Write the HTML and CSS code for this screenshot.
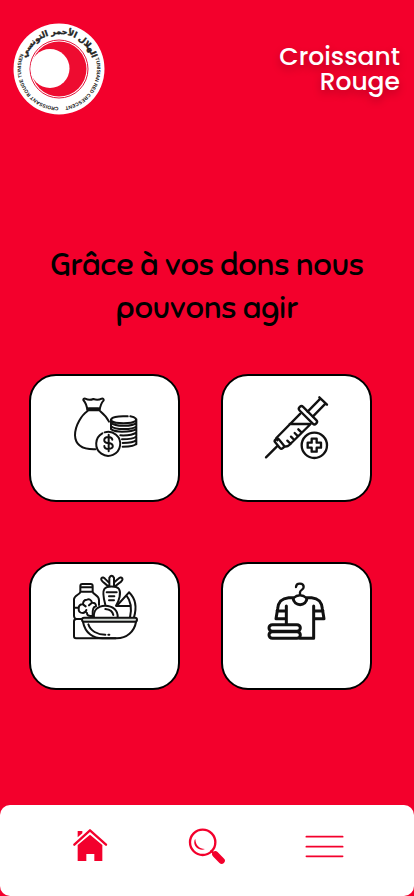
FILE: index.html
```html
<!DOCTYPE html>
<html lang="fr">
<head>
<meta charset="utf-8">
<meta name="viewport" content="width=device-width, initial-scale=1">
<title>Croissant Rouge</title>
<link rel="stylesheet" href="styles.css">
</head>
<body>
<header class="header">
  <svg class="logo" viewBox="0 0 92 92" role="img" aria-label="Croissant Rouge Tunisien">
    <defs>
      <path id="arc-top" d="M11 46A35 35 0 0 1 81 46"/>
      <path id="arc-left" d="M44 84A38 38 0 0 1 10.300 33"/>
      <path id="arc-right" d="M81.700 33A38 38 0 0 1 50 83.800"/>
    </defs>
    <circle cx="46" cy="46" r="45.500" fill="#fff"/>
    <circle cx="46" cy="46" r="29" fill="none" stroke="#e4123a" stroke-width="1"/>
    <circle cx="46" cy="46" r="27.500" fill="#ee0c30"/>
    <circle cx="37" cy="45.500" r="19.500" fill="#fff"/>
    <text class="logo-arabic" text-anchor="middle"><textPath href="#arc-top" startOffset="50%">الهلال الأحمر التونسي</textPath></text>
    <text class="logo-latin" text-anchor="middle"><textPath href="#arc-left" startOffset="50%">CROISSANT ROUGE TUNISIEN</textPath></text>
    <text class="logo-latin" text-anchor="middle"><textPath href="#arc-right" startOffset="50%">TUNISIAN RED CRESCENT</textPath></text>
  </svg>
  <p class="brand">Croissant<br>Rouge</p>
</header>

<main class="main">
  <h1 class="headline">Grâce à vos dons nous pouvons agir</h1>
  <div class="cards">
    <button class="card" type="button" aria-label="Argent">
      <svg class="card-icon" viewBox="157 87 192 192" stroke-width="6">
        <path d="M200 133Q198 113 188 102Q187 97 194 98Q206 104 218 99Q231 104 243 98Q250 97 249 103Q239 114 237 133M204 127H233M200 133H237M201 135C184 146 163 177 163 208C164 239 188 251 224 250M238 135C249 144 259 155 265 167"/>
        <path d="M329 151C346 154 349 160 344 165C334 174 283 174 273 165C265 153 294 149 321 151M271 160V190M347 160V235M272 171C282 182 337 182 347 171M272 181C282 192 337 192 347 181M272 190C281 196 292 197 304 197C324 197 341 194 347 189M299 208C324 209 341 204 347 200M304 220C327 220 342 216 347 211M306 231C328 231 342 227 347 222M306 242C328 242 344 239 347 232"/>
        <path d="M245 202A36 36 0 1 0 252 199M275 221C274 214 269 213 263 213C247 213 247 231 261 231C281 231 281 249 264 249C256 249 251 245 251 240M264 206V256"/>
      </svg>
    </button>
    <button class="card" type="button" aria-label="Soins médicaux">
      <svg class="card-icon" viewBox="157 87 192 192" stroke-width="7">
        <path d="M160 274L193 241M320 94L343 116M323 98L285 137M339 112L301 151"/>
        <rect x="251" y="140" width="70" height="15" rx="7" transform="rotate(45 285.500 147.500)"/>
        <rect x="183" y="226" width="34" height="14" rx="6" transform="rotate(50 200 233)"/>
        <path d="M263 143L191 216L194 223M294 174L230 237Q224 243 215 241M231 174H292M257 190L267 200M246 201L256 211M235 212L245 222M224 224L234 234"/>
        <circle cx="305" cy="238" r="38"/>
        <path d="M297 218H312V230H325V245H312V257H297V245H285V230H297Z"/>
      </svg>
    </button>
    <button class="card card-raised" type="button" aria-label="Nourriture">
      <svg class="card-icon" viewBox="157 60 192 192" stroke-width="6">
        <path d="M179 110V93Q179 87 185 87H210Q216 87 216 93V110ZM179 97H216M179 110C179 119 160 120 160 133V183Q161 191 167 192Q160 193 160 199V244Q160 250 166 250H285M216 110C217 120 235 119 235 136V150M160 158H173M165 192H184"/>
        <path d="M216 183Q214 155 226 154Q226 142 214 143Q210 130 199 134Q187 134 187 148Q174 147 174 160Q173 174 187 174Q196 172 197 165M187 148L195 154M214 143L205 151M199 174Q199 184 212 183"/>
        <path d="M220 187C217 166 232 152 253 152C278 152 292 167 291 187M254 162Q275 164 278 180"/>
        <path d="M254 149C249 130 244 113 251 102C258 92 287 92 295 102C302 113 296 136 286 152M258 112H288M265 124H281M265 136H280M263 96C258 85 238 80 242 70Q247 64 255 73L264 82M266 94V68Q273 56 280 68V94M283 96C288 85 310 80 305 70Q300 64 291 73L281 82"/>
        <path d="M325 112C347 133 348 160 340 187M325 112L288 153H329M317 121C332 139 333 164 328 187"/>
        <rect x="184" y="188" width="165" height="12" rx="6" fill="#d5dad5"/>
        <path d="M187 201C194 236 219 250 245 250H288C318 250 341 230 346 201M203 208C209 228 230 239 254 239M263 239H266"/>
      </svg>
    </button>
    <button class="card card-raised" type="button" aria-label="Vêtements">
      <svg class="card-icon" viewBox="157 60 192 192" stroke-width="9">
        <path stroke-width="7" d="M250 96C251 82 273 83 273 96C273 105 262 104 262 112V121M241 130Q262 112 283 130"/>
        <path d="M241 128H228C205 130 197 141 195 161L190 191H220M283 128H297C319 130 327 141 329 161L334 191H304M241 128C243 156 282 156 283 128M193 168H221M303 168H331M221 153V207M303 153V250H262"/>
        <rect x="169" y="209" width="94" height="20" rx="10"/>
        <rect x="169" y="230" width="94" height="20" rx="10"/>
      </svg>
    </button>
  </div>
</main>

<nav class="tabbar" aria-label="Navigation principale">
  <a class="tab" href="#" aria-label="Accueil">
    <svg class="tab-icon" viewBox="212 90 120 120">
      <path fill="#f3002c" d="M235 105H249V112L235 124ZM272 116L309 147V195H285V174H261V195H235V147Z"/>
      <path fill="none" stroke="#f3002c" stroke-width="7" stroke-linecap="round" stroke-linejoin="round" d="M225 146L272 103L320 146"/>
    </svg>
  </a>
  <a class="tab" href="#" aria-label="Rechercher">
    <svg class="tab-icon" viewBox="561 90 120 120" fill="none" stroke="#f3002c" stroke-linecap="round">
      <circle cx="608" cy="139" r="38" stroke-width="7"/>
      <path stroke="none" fill="#f3002c" d="M586 129C587 149 598 158 615 159C600 166 580 153 583 136Q583 132 586 129Z"/>
      <path stroke-width="7" d="M634 165L642 173"/>
      <path stroke-width="19" d="M646 175L665 194"/>
    </svg>
  </a>
  <button class="tab" type="button" aria-label="Menu">
    <svg class="tab-icon" viewBox="911 90 120 120" fill="none" stroke="#f3002c" stroke-width="5" stroke-linecap="round">
      <path d="M918 122H1027M918 152H1027M918 181H1027"/>
    </svg>
  </button>
</nav>
</body>
</html>
```
FILE: styles.css
```css
* {
  box-sizing: border-box;
}

body {
  margin: 0;
  min-height: 100vh;
  display: flex;
  flex-direction: column;
  background: #f3002c;
  color: #000;
  font-family: "Poppins", "Inter", sans-serif;
}

.header {
  display: flex;
  justify-content: space-between;
  align-items: center;
  padding: 23px 14px 0 13px;
}

.logo {
  width: 92px;
  height: 92px;
}

.logo-arabic {
  font: bold 8px "DejaVu Sans", sans-serif;
  fill: #222;
  stroke: #222;
  stroke-width: 0.4;
}

.logo-latin {
  font: bold 5px "Liberation Sans", sans-serif;
  fill: #111;
}

.brand {
  margin: 0;
  color: #fff;
  font-size: 25px;
  font-weight: 500;
  line-height: 25px;
  text-align: right;
  text-shadow: 0 4px 8px rgba(0, 0, 0, 0.25);
}

.main {
  flex: 1;
  padding-top: 128px;
}

.headline {
  max-width: 340px;
  margin: 0 auto;
  font-family: "Sniglet", "Lato", sans-serif;
  font-size: 32px;
  font-weight: 500;
  line-height: 43px;
  text-align: center;
}

.cards {
  display: grid;
  grid-template-columns: 1fr 1fr;
  gap: 60px 41px;
  margin: 45px 42px 0 29px;
}

.card {
  display: flex;
  justify-content: center;
  align-items: flex-start;
  height: 128px;
  padding: 19px 0 0;
  border: 2px solid #000;
  border-radius: 27px;
  background: #fff;
  cursor: pointer;
}

.card-raised {
  padding-top: 11px;
}

.card-icon {
  width: 64px;
  height: 64px;
  overflow: visible;
  fill: none;
  stroke: #111;
  stroke-linecap: round;
  stroke-linejoin: round;
}

.tabbar {
  display: grid;
  grid-template-columns: repeat(3, 1fr);
  height: 91px;
  padding: 21px 32px 0;
  border-radius: 10px;
  background: #fff;
}

.tab {
  display: flex;
  justify-content: center;
  align-items: flex-start;
  padding: 0;
  border: 0;
  background: none;
  cursor: pointer;
}

.tab-icon {
  width: 40px;
  height: 40px;
}
```
